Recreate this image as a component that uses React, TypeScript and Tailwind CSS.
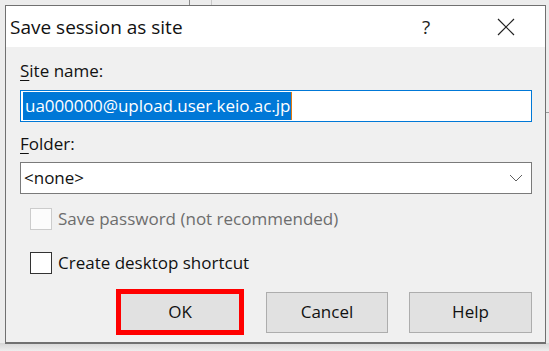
import { useState } from "react";

function CheckRow({ label, disabled }: { label: string; disabled?: boolean }) {
  return (
    <div className="flex items-center h-[22px] pl-[10px]">
      <span
        className={
          disabled
            ? "w-[22px] h-[22px] border border-[#cccccc] bg-[#fcfcfc]"
            : "w-[22px] h-[22px] border border-[#333333] bg-white"
        }
      />
      <span className={disabled ? "ml-[6px] text-[#6d6d6d]" : "ml-[6px] text-[#111111]"}>{label}</span>
    </div>
  );
}

export default function App() {
  const [folder] = useState("<none>");

  return (
    <div
      className="relative w-[549px] h-[351px] overflow-hidden bg-[#ececec] text-[17px] leading-[24px] text-[#111111]"
      style={{ fontFamily: '"Open Sans", "Noto Sans", sans-serif' }}
    >
      {/* desktop behind the dialog */}
      <div className="absolute left-[189px] top-0 w-px h-full bg-[#8a8a8a]" />
      <div className="absolute left-[211px] top-0 w-px h-[5px] bg-[#c8c8c8]" />
      <div className="absolute left-[546px] top-[112px] w-[3px] h-px bg-[#9a9a9a]" />
      <div className="absolute left-0 top-[343px] w-full h-[8px] bg-gradient-to-b from-[#d6d6d6] to-[#eeeeee]" />

      <div className="relative pt-[5px] pl-[5px]">
        <div className="w-[541px] h-[339px] border border-b-2 border-[#707070] bg-[#f0f0f0] flex flex-col">
          {/* Title bar */}
          <div className="h-[41px] bg-white flex items-center shrink-0">
            <span className="pl-[4px] text-[19px]">Save session as site</span>
            <span className="ml-auto w-[20px] text-center text-[19px] text-[#222222]">?</span>
            <div className="ml-[61px] mr-[30px] flex items-center">
              <svg width="18" height="18" viewBox="0 0 18 18">
                <path d="M1 1 L17 17 M17 1 L1 17" stroke="#222222" strokeWidth="1.2" fill="none" />
              </svg>
            </div>
          </div>

          {/* Body */}
          <div className="flex flex-col px-[14px] pr-[12px]">
            <div className="mt-[12px]">
              <u className="underline-offset-[3px]">S</u>ite name:
            </div>
            <div className="mt-[7px] h-[32px] w-[512px] border border-[#0078d7] bg-white flex items-center pl-[2px]">
              <span className="bg-[#0078d7] text-white h-[28px] leading-[28px] pl-[2px] pr-px tracking-[-0.05px]">
                ua000000@upload.user.keio.ac.jp
              </span>
              <span className="w-px h-[28px] bg-[#e07a10]" />
            </div>

            <div className="mt-[10px]">
              <u className="underline-offset-[3px]">F</u>older:
            </div>
            <div className="mt-[6px] h-[32px] w-[512px] border border-[#7a7a7a] bg-white flex items-center pl-[3px] pr-[8px]">
              <span>{folder}</span>
              <svg className="ml-auto" width="14" height="8" viewBox="0 0 14 8">
                <path d="M1 1 L7 7 L13 1" stroke="#606060" strokeWidth="1" fill="none" />
              </svg>
            </div>

            <div className="mt-[14px]">
              <CheckRow label="Save password (not recommended)" disabled />
            </div>
            <div className="mt-[22px]">
              <CheckRow label="Create desktop shortcut" />
            </div>

            <div className="mt-[15px] flex items-center justify-end">
              <div className="w-[128px] h-[46px] border-[5px] border-[#ff0000] bg-[#e1e1e1] flex items-center justify-center">
                OK
              </div>
              <div className="ml-[22px] w-[122px] h-[41px] border border-[#adadad] bg-[#e1e1e1] flex items-center justify-center">
                Cancel
              </div>
              <div className="ml-[21px] mr-px w-[123px] h-[41px] border border-[#adadad] bg-[#e1e1e1] flex items-center justify-center">
                Help
              </div>
            </div>
          </div>
        </div>
      </div>
    </div>
  );
}
